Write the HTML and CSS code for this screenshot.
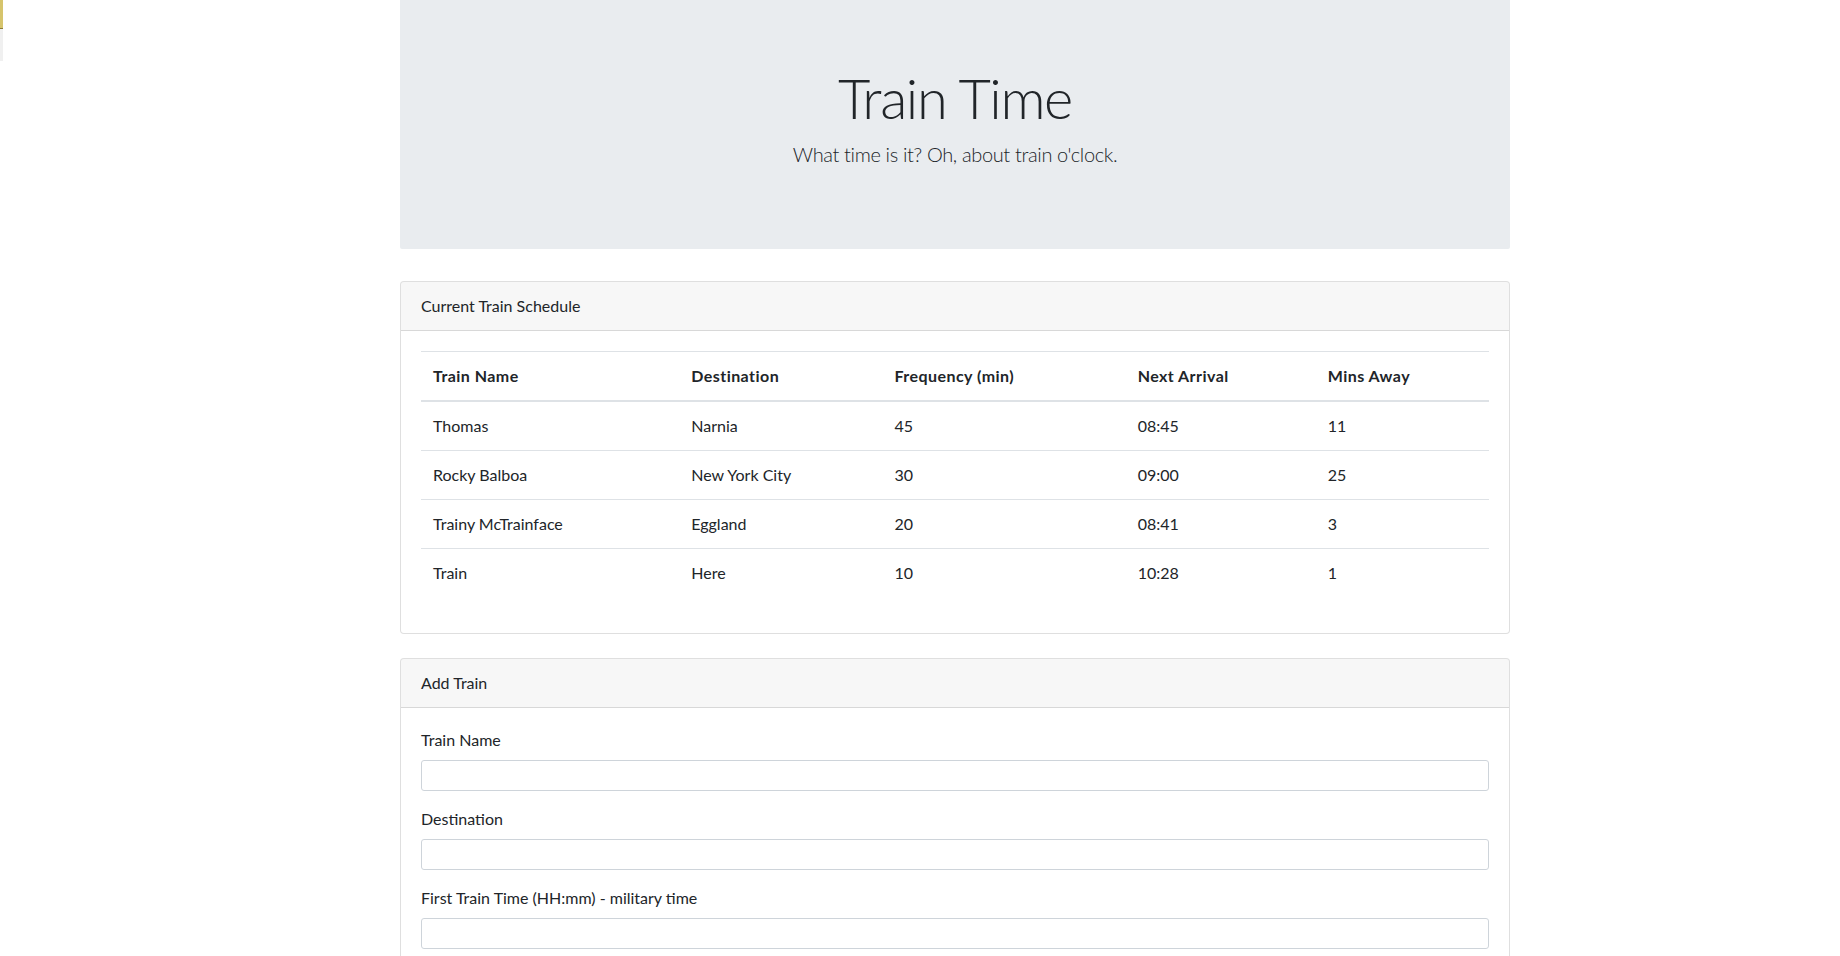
FILE: index.html
```html
<!DOCTYPE html>
<html lang="en">
<head>
<meta charset="utf-8">
<title>Train Time</title>
<link rel="stylesheet" href="styles.css">
</head>
<body>
<div class="edge-tab"></div>
<div class="edge-tab-lower"></div>
<div class="container">
  <header class="jumbotron">
    <h1 class="display">Train Time</h1>
    <p class="lead">What time is it? Oh, about train o'clock.</p>
  </header>

  <section class="card">
    <div class="card-header">Current Train Schedule</div>
    <div class="card-body">
      <table class="table">
        <thead>
          <tr>
            <th>Train Name</th>
            <th>Destination</th>
            <th>Frequency (min)</th>
            <th>Next Arrival</th>
            <th>Mins Away</th>
          </tr>
        </thead>
        <tbody>
          <tr><td>Thomas</td><td>Narnia</td><td>45</td><td>08:45</td><td>11</td></tr>
          <tr><td>Rocky Balboa</td><td>New York City</td><td>30</td><td>09:00</td><td>25</td></tr>
          <tr><td>Trainy McTrainface</td><td>Eggland</td><td>20</td><td>08:41</td><td>3</td></tr>
          <tr><td>Train</td><td>Here</td><td>10</td><td>10:28</td><td>1</td></tr>
        </tbody>
      </table>
    </div>
  </section>

  <section class="card card-spaced">
    <div class="card-header">Add Train</div>
    <div class="card-body">
      <form class="form">
        <div class="form-group">
          <label for="train-name">Train Name</label>
          <input class="form-control" id="train-name" type="text">
        </div>
        <div class="form-group">
          <label for="destination">Destination</label>
          <input class="form-control" id="destination" type="text">
        </div>
        <div class="form-group">
          <label for="first-time">First Train Time (HH:mm) - military time</label>
          <input class="form-control" id="first-time" type="text">
        </div>
      </form>
    </div>
  </section>
</div>
</body>
</html>
```
FILE: styles.css
```css
* { box-sizing: border-box; }

body {
  margin: 0;
  font-family: Lato, "Open Sans", sans-serif;
  font-size: 16px;
  line-height: 1.5;
  color: #212529;
  background: #fff;
}

.edge-tab {
  position: fixed;
  left: 0;
  top: 0;
  width: 3px;
  height: 29px;
  background: #d6c46c;
  border-bottom: 1px solid #8a7a3a;
}
.edge-tab-lower {
  position: fixed;
  left: 0;
  top: 29px;
  width: 3px;
  height: 32px;
  background: #f0f0f0;
}

.container {
  width: 1110px;
  margin-left: 400px;
  padding-bottom: 40px;
}

.jumbotron {
  background: #e9ecef;
  padding: 64px 32px;
  margin-bottom: 32px;
  text-align: center;
  border-radius: 0 0 2px 2px;
}

.display {
  margin: 0 0 8px;
  font-size: 56px;
  font-weight: 300;
  line-height: 1.2;
  letter-spacing: -1.4px;
}

.lead {
  margin: 0 0 16px;
  font-size: 20px;
  font-weight: 300;
  line-height: 1.5;
  letter-spacing: -0.35px;
}

.card {
  border: 1px solid rgba(0, 0, 0, 0.125);
  border-radius: 4px;
  background: #fff;
  overflow: hidden;
}
.card-spaced { margin-top: 24px; }

.card-header {
  padding: 12px 20px;
  background: rgba(0, 0, 0, 0.03);
  border-bottom: 1px solid rgba(0, 0, 0, 0.125);
}

.card-body {
  padding: 20px;
}

.table {
  width: 100%;
  border-collapse: collapse;
  table-layout: fixed;
  margin-bottom: 16px;
}
.table th,
.table td {
  padding: 12px;
  text-align: left;
  vertical-align: top;
  border-top: 1px solid #dee2e6;
}
.table thead th {
  border-bottom: 2px solid #dee2e6;
  font-weight: 700;
  letter-spacing: 0.45px;
}
.table th:nth-child(1) { width: 258px; }
.table th:nth-child(2) { width: 203px; }
.table th:nth-child(3) { width: 243px; }
.table th:nth-child(4) { width: 190px; }
.table th:nth-child(5) { width: 173px; }

.form-group {
  margin-bottom: 16px;
}
.form-group label {
  display: block;
  margin-bottom: 8px;
}
.form-control {
  display: block;
  width: 100%;
  height: 31px;
  padding: 4px 8px;
  font-family: inherit;
  font-size: 14px;
  line-height: 1.5;
  color: #495057;
  background: #fff;
  border: 1px solid #ced4da;
  border-radius: 3px;
}
```
